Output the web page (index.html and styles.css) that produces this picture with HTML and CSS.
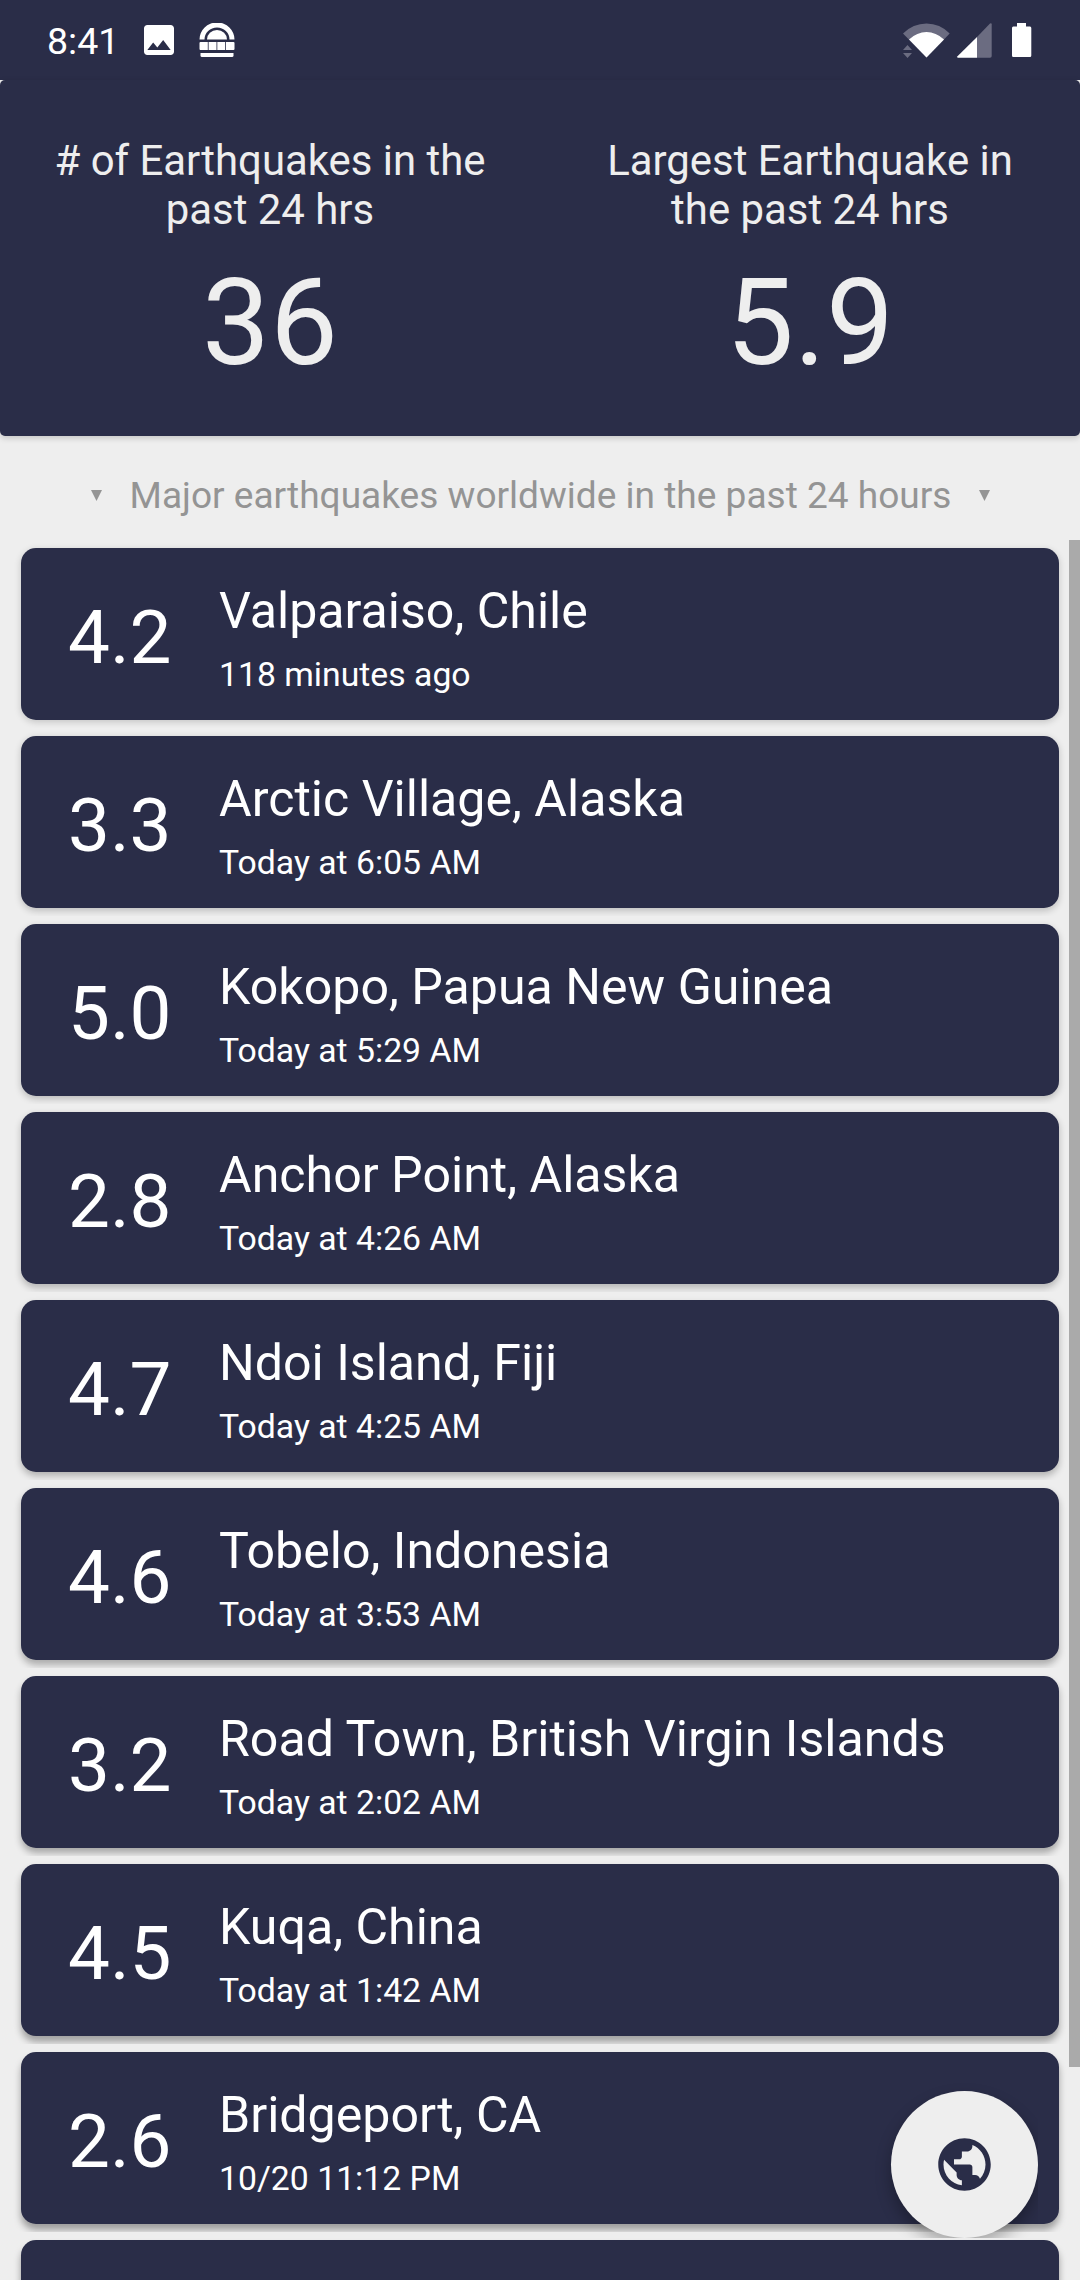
FILE: index.html
```html
<!DOCTYPE html>
<html lang="en">
<head>
<meta charset="utf-8">
<title>Earthquakes</title>
<link rel="stylesheet" href="styles.css">
</head>
<body>
<div class="app">
  <div class="status-bar">
    <span class="clock">8:41</span>
    <svg class="image-icon" viewBox="3 3 18 18"><path d="M21 19V5c0-1.100-.9-2-2-2H5c-1.100 0-2 .9-2 2v14c0 1.100.9 2 2 2h14c1.100 0 2-.9 2-2zM8.500 13.500l2.500 3.010L14.500 12l4.500 6H5l3.500-4.500z"/></svg>
    <svg class="burger-icon" viewBox="0 0 36 35">
      <path d="M0.500 16.500A17.500 17 0 0 1 35.500 16.500H30.500A12.500 12 0 0 0 5.500 16.500Z"/>
      <path d="M8 16.500A10 9.500 0 0 1 28 16.500Z"/>
      <path d="M1.500 19H8.800V27H1.500Q0.500 27 0.500 26V20Q0.500 19 1.500 19ZM9.600 19H17.500V27H9.600ZM18.300 19H26.200V27H18.300ZM27 19H34.500Q35.500 19 35.500 20V26Q35.500 27 34.500 27H27Z"/>
      <path d="M1.500 30H34.500V32.500Q34.500 34 33 34H3Q1.500 34 1.500 32.500Z"/>
    </svg>
    <svg class="system-icons" viewBox="900 20 136 40">
      <path class="dim" d="M926.500 57.500L903 33.500Q913 23.500 926.500 23.500T949.700 33.500Z"/>
      <path d="M926.500 57.500L909 39.500Q917 32 926.500 32T944 39.500Z"/>
      <path class="dim" d="M903 50L907.500 45L912 50ZM903 53L907.500 58L912 53Z"/>
      <path class="dim" d="M977 37L990 23.500Q991.700 22.500 991.700 24.500V56Q991.700 57.700 990 57.700H977Z"/>
      <path d="M977 37V57.700H958Q956.400 57.500 957.500 56.200Z"/>
      <path d="M1017 23H1026V26.500H1030Q1031.300 26.500 1031.300 28V55.500Q1031.300 57 1030 57H1013.300Q1012 57 1012 55.500V28Q1012 26.500 1013.300 26.500H1017Z"/>
    </svg>
  </div>

  <header class="summary">
    <div class="stat">
      <div class="stat-label"># of Earthquakes in the past 24 hrs</div>
      <div class="stat-value">36</div>
    </div>
    <div class="stat">
      <div class="stat-label">Largest Earthquake in the past 24 hrs</div>
      <div class="stat-value">5.9</div>
    </div>
  </header>

  <div class="filter">
    <svg class="caret" viewBox="0 0 11 11"><path d="M0 0H11L5.500 11Z"/></svg>
    <span class="filter-text">Major earthquakes worldwide in the past 24 hours</span>
    <svg class="caret" viewBox="0 0 11 11"><path d="M0 0H11L5.500 11Z"/></svg>
  </div>

  <main class="list">
    <article class="quake" style="--depth:0"><div class="mag">4.2</div><div class="info"><div class="place">Valparaiso, Chile</div><div class="time">118 minutes ago</div></div></article>
    <article class="quake" style="--depth:1"><div class="mag">3.3</div><div class="info"><div class="place">Arctic Village, Alaska</div><div class="time">Today at 6:05 AM</div></div></article>
    <article class="quake" style="--depth:2"><div class="mag">5.0</div><div class="info"><div class="place">Kokopo, Papua New Guinea</div><div class="time">Today at 5:29 AM</div></div></article>
    <article class="quake" style="--depth:3"><div class="mag">2.8</div><div class="info"><div class="place">Anchor Point, Alaska</div><div class="time">Today at 4:26 AM</div></div></article>
    <article class="quake" style="--depth:4"><div class="mag">4.7</div><div class="info"><div class="place">Ndoi Island, Fiji</div><div class="time">Today at 4:25 AM</div></div></article>
    <article class="quake" style="--depth:5"><div class="mag">4.6</div><div class="info"><div class="place">Tobelo, Indonesia</div><div class="time">Today at 3:53 AM</div></div></article>
    <article class="quake" style="--depth:6"><div class="mag">3.2</div><div class="info"><div class="place">Road Town, British Virgin Islands</div><div class="time">Today at 2:02 AM</div></div></article>
    <article class="quake" style="--depth:7"><div class="mag">4.5</div><div class="info"><div class="place">Kuqa, China</div><div class="time">Today at 1:42 AM</div></div></article>
    <article class="quake" style="--depth:8"><div class="mag">2.6</div><div class="info"><div class="place">Bridgeport, CA</div><div class="time">10/20 11:12 PM</div></div></article>
    <article class="quake" style="--depth:9"></article>
  </main>

  <div class="scrollbar"></div>
  <div class="fab">
    <svg viewBox="0 0 24 24"><path d="M12 2C6.480 2 2 6.480 2 12s4.480 10 10 10 10-4.480 10-10S17.520 2 12 2zm-1 17.930c-3.950-.49-7-3.850-7-7.930 0-.62.08-1.210.21-1.790L9 15v1c0 1.100.9 2 2 2v1.930zm6.900-2.540c-.26-.81-1-1.390-1.900-1.390h-1v-3c0-.55-.45-1-1-1H8v-2h2c.55 0 1-.45 1-1V7h2c1.100 0 2-.9 2-2v-.41c2.930 1.190 5 4.060 5 7.410 0 2.080-.8 3.970-2.100 5.390z"/></svg>
  </div>
</div>
</body>
</html>
```
FILE: styles.css
```css
:root {
  --navy: #2a2d48;
  --paper: #eeeeee;
}

* { box-sizing: border-box; }

body {
  margin: 0;
  background: var(--paper);
  font-family: Roboto, "Liberation Sans", sans-serif;
}

.app {
  position: relative;
  display: flex;
  flex-direction: column;
  width: 1080px;
  height: 2280px;
  overflow: hidden;
  background: var(--paper);
}

.status-bar {
  display: flex;
  align-items: center;
  flex: none;
  height: 80px;
  padding: 0 44px 0 47px;
  background: var(--navy);
  color: #fff;
  fill: #fff;
}

.clock {
  width: 97px;
  padding-top: 2px;
  font-size: 37.5px;
  line-height: 44px;
}

.image-icon {
  width: 30px;
  height: 30px;
}

.burger-icon {
  width: 36px;
  height: 35px;
  margin-left: 25px;
}

.system-icons {
  width: 136px;
  height: 40px;
  margin-left: auto;
}

.dim { fill: #6b6c81; }

.summary {
  display: grid;
  grid-template-columns: 1fr 1fr;
  flex: none;
  height: 356px;
  padding-top: 56px;
  border-radius: 5px;
  background: var(--navy);
  box-shadow: 0 2px 6px rgba(0, 0, 0, 0.18);
  color: var(--paper);
  text-align: center;
}

.stat { padding: 0 40px; }

.stat-label {
  font-size: 41.9px;
  line-height: 49px;
}

.stat-value {
  margin-top: 18px;
  font-size: 121px;
  line-height: 142px;
}

.filter {
  display: flex;
  align-items: center;
  justify-content: center;
  gap: 28px;
  flex: none;
  height: 104px;
  padding: 15px 0 0 1px;
  color: #949494;
  fill: #949494;
}

.filter-text {
  font-size: 37.05px;
  line-height: 44px;
  white-space: nowrap;
}

.caret {
  width: 11px;
  height: 11px;
}

.list {
  display: flex;
  flex-direction: column;
  gap: 16px;
  padding: 8px 21px 0;
}

/* Shadows deepen toward the bottom of the screen and end inside the gap. */
.quake {
  display: flex;
  flex: none;
  height: 172px;
  padding-left: 47px;
  border-radius: 15px;
  background: var(--navy);
  box-shadow: 0 calc(2px + var(--depth) * 0.5px) 7px rgba(0, 0, 0, calc(0.18 + var(--depth) * 0.02));
  clip-path: inset(-8px -10px);
  color: #fff;
}

.mag {
  width: 151px;
  padding-top: 46px;
  font-size: 74.6px;
  line-height: 88px;
}

.info { padding-top: 34px; }

.place {
  font-size: 50.1px;
  line-height: 58px;
  white-space: nowrap;
}

.time {
  margin-top: 15px;
  font-size: 33.75px;
  line-height: 40px;
}

.scrollbar {
  position: absolute;
  top: 540px;
  right: 0;
  width: 11px;
  height: 1527px;
  background: #aaaaaa;
}

.fab {
  position: absolute;
  right: 42px;
  bottom: 42px;
  display: flex;
  align-items: center;
  justify-content: center;
  width: 147px;
  height: 147px;
  border-radius: 50%;
  background: var(--paper);
  box-shadow: 0 8px 16px rgba(0, 0, 0, 0.3);
  clip-path: inset(-20px 0 0 -20px);
  fill: var(--navy);
}

.fab svg {
  width: 63px;
  height: 63px;
}
```
